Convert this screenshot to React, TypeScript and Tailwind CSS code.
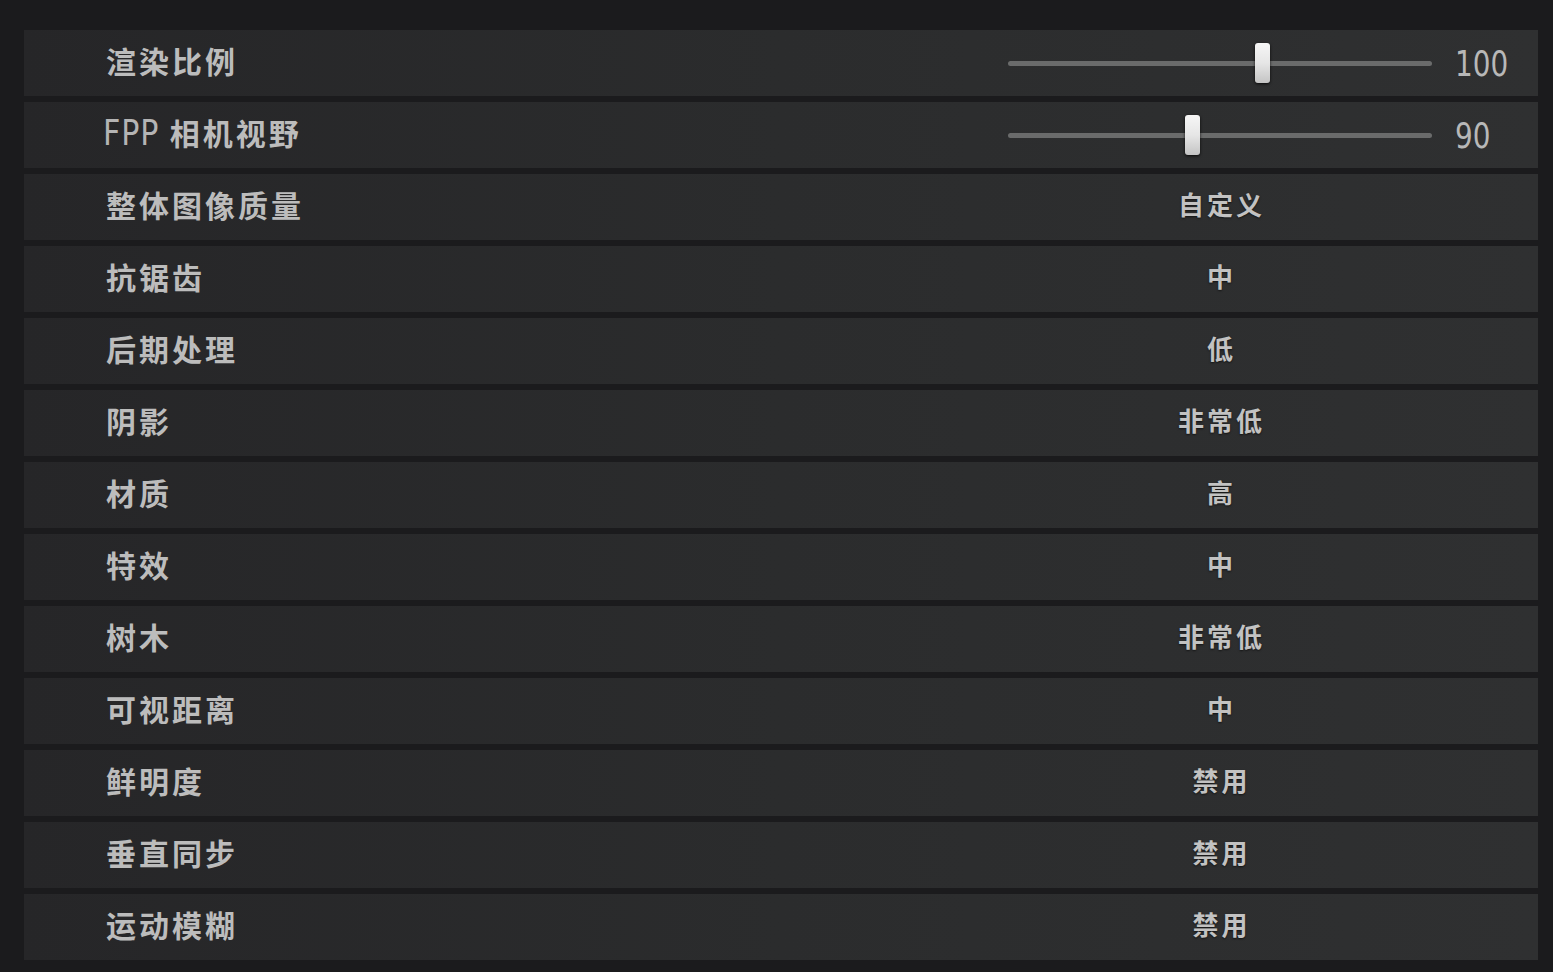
import React from "react";

type Row =
  | { label: React.ReactNode; kind: "slider"; pct: number; value: string }
  | { label: React.ReactNode; kind: "select"; value: string };

const cjk = '"Noto Sans CJK SC", "Noto Sans", sans-serif';
const narrow = '"Liberation Sans Narrow", "DejaVu Sans Condensed", "Liberation Sans", sans-serif';

const rows: Row[] = [
  { label: "渲染比例", kind: "slider", pct: 0.6, value: "100" },
  {
    label: (
      <>
        <span
          className="inline-block origin-left scale-x-[0.93] font-normal text-[36px] tracking-[1px] text-[#b4b4b4] mr-[6px] leading-none pt-[2px]"
          style={{ fontFamily: narrow }}
        >
          FPP
        </span>
        相机视野
      </>
    ),
    kind: "slider",
    pct: 0.436,
    value: "90",
  },
  { label: "整体图像质量", kind: "select", value: "自定义" },
  { label: "抗锯齿", kind: "select", value: "中" },
  { label: "后期处理", kind: "select", value: "低" },
  { label: "阴影", kind: "select", value: "非常低" },
  { label: "材质", kind: "select", value: "高" },
  { label: "特效", kind: "select", value: "中" },
  { label: "树木", kind: "select", value: "非常低" },
  { label: "可视距离", kind: "select", value: "中" },
  { label: "鲜明度", kind: "select", value: "禁用" },
  { label: "垂直同步", kind: "select", value: "禁用" },
  { label: "运动模糊", kind: "select", value: "禁用" },
];

function Slider({ pct }: { pct: number }) {
  return (
    <div className="relative w-[424px] h-[40px] flex items-center">
      <div className="w-full h-[5px] rounded-full bg-[#6a6b6b]" />
      <div
        className="absolute top-0 w-[15px] h-[40px] rounded-[3px] bg-gradient-to-b from-[#f6f6f6] via-[#e6e6e6] to-[#c4c4c4] shadow-[0_1px_3px_rgba(0,0,0,0.8)]"
        style={{ left: `${pct * 424 - 7.5}px` }}
      />
    </div>
  );
}

export default function App() {
  return (
    <div
      className="w-[1553px] h-[972px] overflow-hidden bg-[#1b1b1d] flex flex-col gap-[6px] pt-[30px] pl-[24px] pr-[15px]"
      style={{ fontFamily: cjk }}
    >
      {rows.map((r, i) => (
        <div
          key={i}
          className="h-[66px] shrink-0 flex items-center bg-gradient-to-r from-[#262628] via-[#2b2c2d] to-[#2f3031]"
        >
          <div
            className={`flex-1 flex items-center font-bold text-[30px] leading-none tracking-[3px] text-[#bcbcbc] pb-[7px] ${
              i === 1 ? "pl-[79px]" : "pl-[82px]"
            }`}
          >
            {r.label}
          </div>
          <div className="w-[530px] flex items-center">
            {r.kind === "slider" ? (
              <>
                <Slider pct={r.pct} />
                <span
                  className="inline-block origin-left scale-x-[0.86] ml-[23px] text-[36px] text-[#b8b8b8] leading-none pt-[2px]"
                  style={{ fontFamily: narrow }}
                >
                  {r.value}
                </span>
              </>
            ) : (
              <div className="w-[424px] text-center font-bold text-[26px] leading-none tracking-[3px] text-[#c2c2c2] [text-shadow:0_1px_2px_rgba(0,0,0,0.6)] pl-[3px] pb-[6px]">
                {r.value}
              </div>
            )}
          </div>
        </div>
      ))}
    </div>
  );
}
